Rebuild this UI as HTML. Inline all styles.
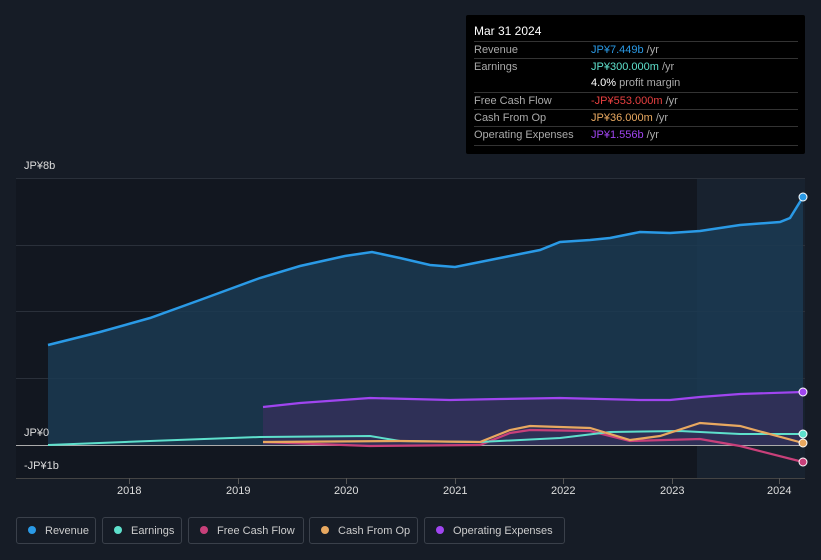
<!DOCTYPE html>
<html><head><style>
body{margin:0;width:821px;height:560px;background:#161c26;font-family:"Liberation Sans",sans-serif;overflow:hidden;position:relative}
.tt{position:absolute;left:466px;top:15px;width:339px;height:139px;background:#000;border-radius:2px}
.tt .h{position:absolute;left:8px;top:9px;color:#fff;font-size:12px}
.row{position:absolute;left:8px;width:324px;border-top:1px solid #333;font-size:11px;color:#aaa;height:17px;line-height:17px}
.row span{position:absolute;left:117px}
.lg{position:absolute;top:517px;height:27px;border:1px solid #3a404a;border-radius:3px;color:#ccc;font-size:11px;line-height:27px;box-sizing:border-box}
.lg i{display:inline-block;width:8px;height:8px;border-radius:50%;margin:0 9px 0 11px;vertical-align:-0px}
.ax{position:absolute;color:#ddd;font-size:11px}
</style></head><body>
<svg width="821" height="560" style="position:absolute;left:0;top:0">
<rect x="16" y="178" width="681" height="300" fill="#121720"/>
<rect x="697" y="178" width="108" height="300" fill="#18222f"/>
<g stroke="#2a303a" stroke-width="1"><line x1="16" y1="178.5" x2="805" y2="178.5"/><line x1="16" y1="245.5" x2="805" y2="245.5"/><line x1="16" y1="311.5" x2="805" y2="311.5"/><line x1="16" y1="378.5" x2="805" y2="378.5"/></g>
<path d="M48,345 L100,332 L150,318 L200,300 L260,278 L300,266 L345,256 L372,252 L400,258 L430,265 L455,267 L480,262 L510,256 L540,250 L560,242 L590,240 L610,238 L640,232 L670,233 L700,231 L740,225 L780,222 L790,218 L803,197 L803,445 L48,445Z" fill="#1b3a52" opacity="0.85"/>
<path d="M263,407 L300,403 L370,398 L450,400 L500,399 L560,398 L640,400 L670,400 L700,397 L740,394 L803,392 L803,445 L263,445Z" fill="#35305a" opacity="0.8"/>
<line x1="16" y1="445.5" x2="805" y2="445.5" stroke="#aaa" stroke-width="1"/>
<line x1="16" y1="478.5" x2="805" y2="478.5" stroke="#444" stroke-width="1"/>
<path d="M263,442 L370,446 L480,445 L510,433 L530,430 L590,431 L630,441 L700,439 L740,446 L803,462" fill="none" stroke="#c8407a" stroke-width="2.2"/>
<path d="M48,445 L150,441 L260,437 L370,436 L400,441 L480,442 L560,438 L610,432 L680,431 L740,434 L803,434" fill="none" stroke="#5ee0cc" stroke-width="2"/>
<path d="M263,442 L400,441 L480,442 L510,430 L530,426 L590,428 L630,440 L660,436 L700,423 L740,426 L803,443" fill="none" stroke="#e8a860" stroke-width="2.2"/>
<path d="M263,407 L300,403 L370,398 L450,400 L500,399 L560,398 L640,400 L670,400 L700,397 L740,394 L803,392" fill="none" stroke="#a045f0" stroke-width="2.2"/>
<path d="M48,345 L100,332 L150,318 L200,300 L260,278 L300,266 L345,256 L372,252 L400,258 L430,265 L455,267 L480,262 L510,256 L540,250 L560,242 L590,240 L610,238 L640,232 L670,233 L700,231 L740,225 L780,222 L790,218 L803,197" fill="none" stroke="#2a9ae6" stroke-width="2.5"/>
<circle cx="803" cy="197" r="4" fill="#2a9ae6" stroke="#fff" stroke-width="1"/>
<circle cx="803" cy="392" r="4" fill="#a045f0" stroke="#fff" stroke-width="1"/>
<circle cx="803" cy="434" r="4" fill="#5ee0cc" stroke="#fff" stroke-width="1"/>
<circle cx="803" cy="443" r="4" fill="#e8a860" stroke="#fff" stroke-width="1"/>
<circle cx="803" cy="462" r="4" fill="#c8407a" stroke="#fff" stroke-width="1"/>
<g stroke="#555"><line x1="129.5" y1="478" x2="129.5" y2="484"/><line x1="238.5" y1="478" x2="238.5" y2="484"/><line x1="346.5" y1="478" x2="346.5" y2="484"/><line x1="455.5" y1="478" x2="455.5" y2="484"/><line x1="563.5" y1="478" x2="563.5" y2="484"/><line x1="672.5" y1="478" x2="672.5" y2="484"/><line x1="779.5" y1="478" x2="779.5" y2="484"/></g>
</svg>
<div class="ax" style="left:24px;top:160px">JP¥8b</div>
<div class="ax" style="left:24px;top:427px">JP¥0</div>
<div class="ax" style="left:24px;top:460px">-JP¥1b</div>
<div class="ax" style="left:117px;top:485px">2018</div>
<div class="ax" style="left:226px;top:485px">2019</div>
<div class="ax" style="left:334px;top:485px">2020</div>
<div class="ax" style="left:443px;top:485px">2021</div>
<div class="ax" style="left:551px;top:485px">2022</div>
<div class="ax" style="left:660px;top:485px">2023</div>
<div class="ax" style="left:767px;top:485px">2024</div>
<div class="tt"><div class="h">Mar 31 2024</div>
<div class="row" style="top:26px">Revenue<span><b style="color:#2a9ae6;font-weight:normal">JP¥7.449b</b> /yr</span></div>
<div class="row" style="top:43px">Earnings<span><b style="color:#5ee0cc;font-weight:normal">JP¥300.000m</b> /yr</span></div>
<div class="row" style="top:60px;border:0">&nbsp;<span><b style="color:#fff;font-weight:normal">4.0%</b> profit margin</span></div>
<div class="row" style="top:77px">Free Cash Flow<span><b style="color:#e84040;font-weight:normal">-JP¥553.000m</b> /yr</span></div>
<div class="row" style="top:94px">Cash From Op<span><b style="color:#e8a860;font-weight:normal">JP¥36.000m</b> /yr</span></div>
<div class="row" style="top:111px">Operating Expenses<span><b style="color:#a045f0;font-weight:normal">JP¥1.556b</b> /yr</span></div>
<div class="row" style="top:130px;height:1px"></div>
</div>
<div class="lg" style="left:16px;width:80px"><i style="background:#2a9ae6"></i>Revenue</div>
<div class="lg" style="left:102px;width:80px"><i style="background:#5ee0cc"></i>Earnings</div>
<div class="lg" style="left:188px;width:116px"><i style="background:#c8407a"></i>Free Cash Flow</div>
<div class="lg" style="left:309px;width:109px"><i style="background:#e8a860"></i>Cash From Op</div>
<div class="lg" style="left:424px;width:141px"><i style="background:#a045f0"></i>Operating Expenses</div>
</body></html>
